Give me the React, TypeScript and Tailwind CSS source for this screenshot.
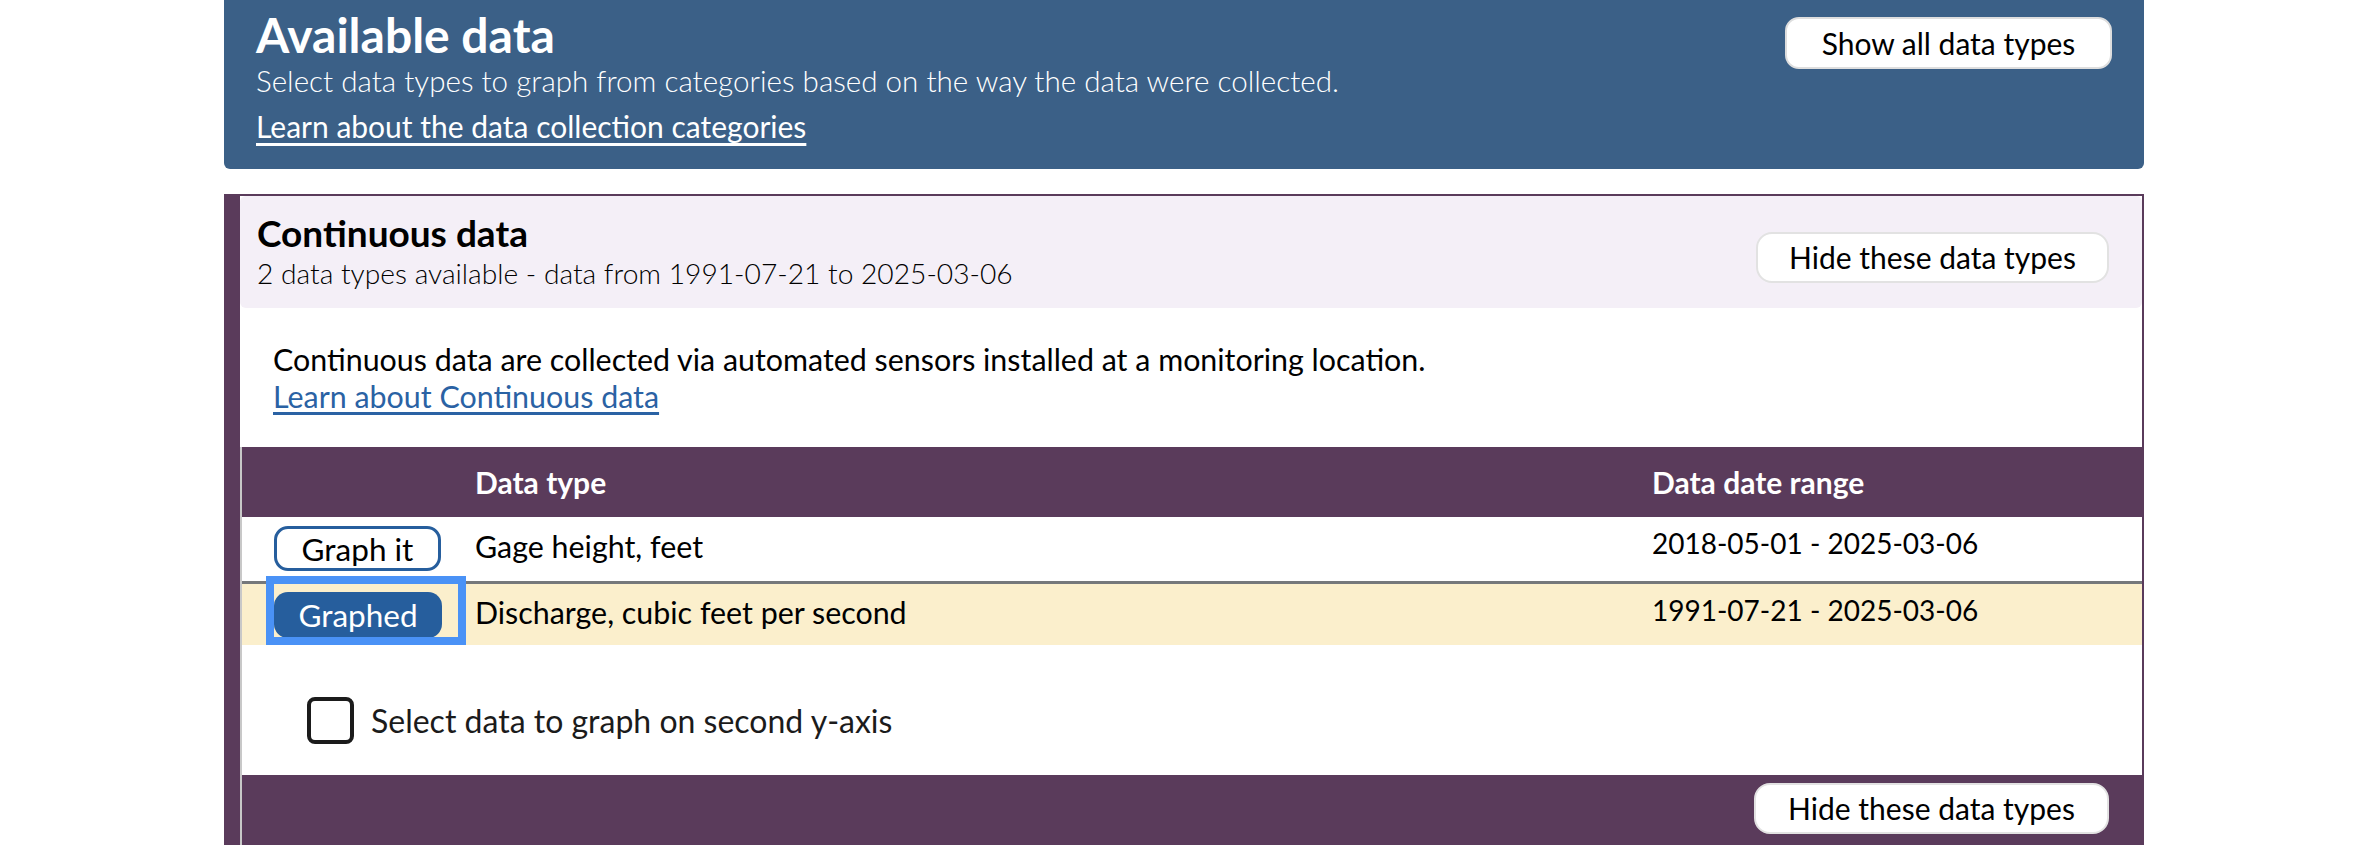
import { useState } from 'react';

interface DataRow {
  id: string;
  name: string;
  range: string;
}

const ROWS: DataRow[] = [
  { id: 'gage', name: 'Gage height, feet', range: '2018-05-01 - 2025-03-06' },
  { id: 'discharge', name: 'Discharge, cubic feet per second', range: '1991-07-21 - 2025-03-06' },
];

export default function App() {
  const [graphed, setGraphed] = useState('discharge');
  const [secondAxis, setSecondAxis] = useState(false);

  return (
    <div className="min-h-screen bg-white font-['Lato','Liberation_Sans',sans-serif] text-black">
      <div className="mx-auto w-[1920px]">
        {/* Available data header */}
        <div className="flex items-start justify-between rounded-b-[6px] bg-[#3b6087] pl-[32px] pr-[32px] pt-[7px] pb-[25px] text-white">
          <div>
            <h2 className="text-[48px] font-bold leading-[56px]">Available data</h2>
            <p className="text-[29.6px] font-light leading-[36px]">
              Select data types to graph from categories based on the way the data were collected.
            </p>
            <a href="#" className="mt-[9px] block text-[30px] leading-[36px] underline underline-offset-[5px]">
              Learn about the data collection categories
            </a>
          </div>
          <button className="mt-[10px] h-[52px] w-[327px] rounded-[14px] border-2 border-[#dedede] bg-white text-[30px] text-black">
            Show all data types
          </button>
        </div>

        {/* Continuous data panel */}
        <div className="mt-[25px] border-l-[16px] border-r-2 border-t-2 border-[#5a3b5b]">
          <div className="flex items-start justify-between rounded-[6px] bg-[#f4eff7] pl-[17px] pr-[33px] pt-[15px] pb-[17px]">
            <div>
              <h3 className="text-[37px] font-bold leading-[44px]">Continuous data</h3>
              <p className="text-[28.2px] font-light leading-[36px]">
                2 data types available - data from 1991-07-21 to 2025-03-06
              </p>
            </div>
            <button className="mt-[21px] h-[51px] w-[353px] rounded-[16px] border-2 border-[#e2e2e2] bg-white text-[30px]">
              Hide these data types
            </button>
          </div>

          <div className="pl-[33px] pt-[33px] pb-[33px]">
            <p className="text-[30.4px] leading-[36px]">
              Continuous data are collected via automated sensors installed at a monitoring location.
            </p>
            <a href="#" className="mt-[1px] inline-block text-[30.4px] leading-[36px] text-[#2a62a4] underline underline-offset-[4px]">
              Learn about Continuous data
            </a>
          </div>

          <div className="border-l-2 border-[#c8c8c8]">
            {/* Table */}
            <div className="grid h-[70px] grid-cols-[224px_1177px_1fr] items-center bg-[#5a3b5b] text-[30px] font-bold text-white">
              <div />
              <div className="pl-[9px]">Data type</div>
              <div className="pl-[9px]">Data date range</div>
            </div>
            {ROWS.map((row, i) => {
              const isGraphed = graphed === row.id;
              return (
                <div
                  key={row.id}
                  className={`grid grid-cols-[224px_1177px_1fr] ${
                    i > 0 ? 'border-t-[3px] border-[#75787b]' : ''
                  } ${isGraphed ? 'h-[64px] bg-[#fbefcc]' : 'h-[64px] bg-white'}`}
                >
                  <div className="pl-[32px]">
                    {isGraphed ? (
                      <div className="h-[53px] w-[184px] pt-[8px] outline-[8px] outline-solid outline-[#4a92f6]">
                        <button className="h-[46px] w-[168px] rounded-[14px] bg-[#265e9d] text-[31.5px] leading-[36px] text-white">
                          Graphed
                        </button>
                      </div>
                    ) : (
                      <button
                        onClick={() => setGraphed(row.id)}
                        className="mt-[9px] h-[45px] w-[167px] rounded-[14px] border-[3px] border-[#265e9d] bg-white text-[31.5px] leading-[36px]"
                      >
                        Graph it
                      </button>
                    )}
                  </div>
                  <div className={`pl-[9px] text-[30.4px] leading-[36px] ${isGraphed ? 'pt-[10px]' : 'pt-[11px]'}`}>{row.name}</div>
                  <div className="pl-[9px] pt-[8px] text-[28px] leading-[36px]">{row.range}</div>
                </div>
              );
            })}

            {/* Second y-axis */}
            <div className="pl-[65px] pt-[52px] pb-[31px]">
              <label className="flex items-center gap-[17px] text-[32px] leading-[36px] text-[#1b1b1b]">
                <span
                  onClick={() => setSecondAxis(!secondAxis)}
                  className={`h-[47px] w-[47px] rounded-[8px] border-[4px] border-[#1b1b1b] ${secondAxis ? 'bg-[#265e9d]' : 'bg-white'}`}
                />
                Select data to graph on second y-axis
              </label>
            </div>

            {/* Footer */}
            <div className="flex h-[70px] items-start justify-end bg-[#5a3b5b] pr-[33px] pt-[8px]">
              <button className="h-[51px] w-[355px] rounded-[16px] border-2 border-[#e2e2e2] bg-white text-[30px]">
                Hide these data types
              </button>
            </div>
          </div>
        </div>
      </div>
    </div>
  );
}
